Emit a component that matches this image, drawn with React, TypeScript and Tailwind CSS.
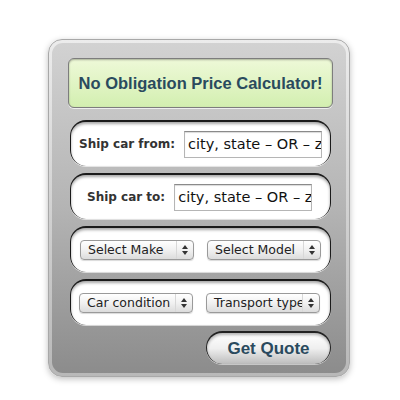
import React from "react";

const card =
  "mx-[2px] flex items-center rounded-[16px] bg-white border-t-[2px] border-l border-r border-[#1a1a1a] shadow-[inset_0_2px_3px_rgba(0,0,0,0.35),0_1px_0_rgba(255,255,255,0.6)]";

const dejavu = { fontFamily: '"DejaVu Sans", Verdana, sans-serif' };

const Select = ({ label }: { label: string }) => (
  <div className="flex w-[114px] h-[20px] rounded-[4px] border border-[#9a9a9a] bg-gradient-to-b from-[#ffffff] via-[#f1f1f1] to-[#dcdcdc] shadow-[0_1px_1px_rgba(0,0,0,0.15)] overflow-hidden">
    <div
      className="flex-1 min-w-0 flex items-center pl-[7px] text-[12.5px] text-[#222] whitespace-nowrap overflow-hidden"
      style={dejavu}
    >
      {label}
    </div>
    <div className="w-[17px] h-full border-l border-[#d8d8d8] flex flex-col items-center justify-center gap-[2px]">
      <svg width="6" height="4" viewBox="0 0 6 4"><path d="M0 4 L3 0 L6 4 Z" fill="#333" /></svg>
      <svg width="6" height="4" viewBox="0 0 6 4"><path d="M0 0 L3 4 L6 0 Z" fill="#333" /></svg>
    </div>
  </div>
);

const Field = ({ label, indent }: { label: string; indent: string }) => (
  <div className={`${card} h-[46px] ${indent} gap-[9px]`}>
    <span className="text-[12px] font-bold text-[#333] whitespace-nowrap" style={dejavu}>
      {label}
    </span>
    <input
      readOnly
      value="city, state – OR – zip"
      className="w-[138px] h-[27px] border border-[#b5b5b5] border-t-[#8a8a8a] bg-white pl-[3px] text-[14.5px] text-[#111] outline-none shadow-[inset_0_1px_1px_rgba(0,0,0,0.15)]"
      style={dejavu}
    />
  </div>
);

export default function App() {
  return (
    <div className="w-[400px] h-[400px] bg-white pt-[39px] pl-[48px]">
      <div className="w-[302px] h-[338px] rounded-[14px] border border-[#a8a8a8] bg-gradient-to-b from-[#ececec] to-[#b8b8b8] p-[3px] shadow-[0_2px_6px_rgba(0,0,0,0.25)]">
        <div className="h-full rounded-[11px] bg-gradient-to-b from-[#d2d2d2] via-[#b4b4b4] to-[#8c8c8c] pt-[15px] pl-[16px] pr-[13px] flex flex-col">
          <div className="h-[50px] rounded-[6px] border border-[#7d7d7d] bg-gradient-to-b from-[#eef9d8] to-[#d3efb0] shadow-[inset_0_1px_2px_rgba(0,0,0,0.3),0_1px_0_rgba(255,255,255,0.7)] flex items-center justify-center">
            <span
              className="text-[16.5px] font-bold text-[#2a4a5e]"
              style={{ fontFamily: '"Liberation Sans", Arial, sans-serif' }}
            >
              No Obligation Price Calculator!
            </span>
          </div>
          <div className="mt-[12px] flex flex-col gap-[7px]">
            <Field label="Ship car from:" indent="pl-[8px]" />
            <Field label="Ship car to:" indent="pl-[16px]" />
            <div className={`${card} h-[46px] pl-[9px] gap-[13px]`}>
              <Select label="Select Make" />
              <Select label="Select Model" />
            </div>
            <div className={`${card} h-[46px] pl-[8px] gap-[13px]`}>
              <Select label="Car condition" />
              <Select label="Transport type" />
            </div>
          </div>
          <div className="mt-[6px] flex justify-end pr-[2px]">
            <button
              className="w-[125px] h-[33px] rounded-full border-t-[2px] border-l border-r border-[#222] bg-gradient-to-b from-[#ffffff] via-[#efefef] to-[#bdbdbd] shadow-[inset_0_2px_3px_rgba(0,0,0,0.3),0_1px_0_rgba(255,255,255,0.5)] text-[17px] font-bold text-[#2a4a5e]"
              style={{ fontFamily: '"Liberation Sans", Arial, sans-serif' }}
            >
              Get Quote
            </button>
          </div>
        </div>
      </div>
    </div>
  );
}
